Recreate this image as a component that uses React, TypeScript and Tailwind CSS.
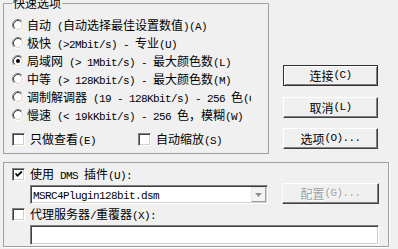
import React from 'react';

const CJK_RUN = /([\u2e80-\u9fff\u3000-\u303f\uff00-\uffef]+)/;
const CJK_TEST = /[\u2e80-\u9fff\u3000-\u303f\uff00-\uffef]/;

// SimSun-like mix: CJK at 12px, half-width Latin at 6px advance
const T = ({ s }: { s: string }) => (
  <>
    {s.split(CJK_RUN).map((p, i) =>
      p === '' ? null : CJK_TEST.test(p) ? (
        <span key={i} className="font-['Noto_Sans_CJK_SC',sans-serif] text-[12px]">
          {p}
        </span>
      ) : (
        <span key={i} className="font-['Liberation_Mono',monospace] text-[11px] tracking-[-0.6px]">
          {p}
        </span>
      )
    )}
  </>
);

const Radio = ({ on }: { on?: boolean }) => (
  <svg width="12" height="12" viewBox="0 0 12 12" className="shrink-0">
    <circle cx="6" cy="6" r="5" fill="#fff" />
    <path d="M2.11 9.89 A5.5 5.5 0 0 1 9.89 2.11" fill="none" stroke="#808080" />
    <path d="M9.89 2.11 A5.5 5.5 0 0 1 2.11 9.89" fill="none" stroke="#fff" />
    <path d="M2.82 9.18 A4.5 4.5 0 0 1 9.18 2.82" fill="none" stroke="#404040" />
    <path d="M9.18 2.82 A4.5 4.5 0 0 1 2.82 9.18" fill="none" stroke="#d4d0c8" />
    {on && <circle cx="6" cy="6" r="2" fill="#000" />}
  </svg>
);

const Check = ({ on }: { on?: boolean }) => (
  <div className="w-[13px] h-[13px] shrink-0 bg-white border border-t-[#808080] border-l-[#808080] border-r-white border-b-white shadow-[inset_1px_1px_0_#404040,inset_-1px_-1px_0_#d4d0c8] flex items-center justify-center">
    {on && (
      <svg width="9" height="9" viewBox="0 0 9 9">
        <path d="M1.5 3.5 L3.5 5.8 L7.8 1.5" fill="none" stroke="#000" strokeWidth="1.8" />
      </svg>
    )}
  </div>
);

const Button = ({ label, primary, disabled, w = 'w-[95px]' }: { label: string; primary?: boolean; disabled?: boolean; w?: string }) => (
  <div
    className={
      'h-[21px] flex items-center justify-center bg-[#f0f0f0] whitespace-pre ' +
      w +
      (primary
        ? ' border border-[#303030] shadow-[inset_1px_1px_0_#fff,inset_-1px_-1px_0_#808080]'
        : ' border border-t-white border-l-white border-r-[#404040] border-b-[#404040] shadow-[inset_-1px_-1px_0_#808080]') +
      (disabled ? ' text-[#a0a0a0] [text-shadow:1px_1px_0_#fff]' : ' text-black')
    }
  >
    <T s={label} />
  </div>
);

const speeds = [
  { label: '自动 (自动选择最佳设置数值)(A)' },
  { label: '极快 (>2Mbit/s) - 专业(U)' },
  { label: '局域网 (> 1Mbit/s) - 最大颜色数(L)', on: true },
  { label: '中等 (> 128Kbit/s) - 最大颜色数(M)' },
  { label: '调制解调器 (19 - 128Kbit/s) - 256 色(O)' },
  { label: '慢速 (< 19kKbit/s) - 256 色，模糊(W)' },
];

export default function App() {
  return (
    <div className="w-[398px] h-[249px] overflow-hidden bg-[#f0f0f0] text-black flex flex-col">
      <div className="flex items-start">
        <fieldset className="ml-[3px] mt-[-3px] w-[266px] border border-[#a0a0a0] pl-[8px] pt-[6px] pb-[5px]">
          <legend className="px-[1px] text-[12px] leading-[12px]">
            <T s="快速选项" />
          </legend>
          {speeds.map((r) => (
            <div key={r.label} className="flex items-center h-[18px] w-[239px] overflow-hidden whitespace-pre leading-[18px]">
              <Radio on={r.on} />
              <div className="ml-[3px]">
                <T s={r.label} />
              </div>
            </div>
          ))}
          <div className="flex items-center h-[18px] mt-[6px] whitespace-pre leading-[18px]">
            <div className="flex items-center w-[126px]">
              <Check />
              <div className="ml-[5px]">
                <T s="只做查看(E)" />
              </div>
            </div>
            <div className="flex items-center">
              <Check />
              <div className="ml-[5px]">
                <T s="自动缩放(S)" />
              </div>
            </div>
          </div>
        </fieldset>
        <div className="ml-[14px] pt-[65px] flex flex-col">
          <Button label="连接(C)" primary />
          <div className="mt-[11px]">
            <Button label="取消(L)" />
          </div>
          <div className="mt-[10px]">
            <Button label="选项(O)..." />
          </div>
        </div>
      </div>

      <div className="ml-[3px] mt-[8px] w-[386px] h-[85px] border border-[#a0a0a0] shadow-[1px_1px_0_#fff] pl-[8px] pt-[2px]">
        <div className="flex items-center h-[18px] whitespace-pre leading-[18px]">
          <Check on />
          <div className="ml-[5px]">
            <T s="使用 DMS 插件(U):" />
          </div>
        </div>
        <div className="flex items-end h-[21px] pl-[18px]">
          <div className="w-[238px] h-[19px] bg-white border border-t-[#808080] border-l-[#808080] border-r-white border-b-white shadow-[inset_1px_1px_0_#404040,inset_-1px_-1px_0_#d4d0c8] flex items-center pl-[2px] pr-[1px] whitespace-pre">
            <div className="flex-1 leading-[15px]">
              <T s="MSRC4Plugin128bit.dsm" />
            </div>
            <div className="w-[15px] h-[15px] bg-[#f4f4f4] border border-t-[#e8e8e8] border-l-[#e8e8e8] border-r-[#a0a0a0] border-b-[#a0a0a0] flex items-center justify-center">
              <svg width="7" height="4" viewBox="0 0 7 4">
                <path d="M0 0 H7 L3.5 4 Z" fill="#909090" />
              </svg>
            </div>
          </div>
          <div className="ml-[14px]">
            <Button label="配置(G)..." disabled w="w-[97px]" />
          </div>
        </div>
        <div className="flex items-center h-[18px] mt-[1px] whitespace-pre leading-[18px]">
          <Check />
          <div className="ml-[5px]">
            <T s="代理服务器/重覆器(X):" />
          </div>
        </div>
        <div className="ml-[18px] mt-[2px] w-[349px] h-[20px] bg-white border border-t-[#808080] border-l-[#808080] border-r-white border-b-white shadow-[inset_1px_1px_0_#404040,inset_-1px_-1px_0_#d4d0c8]" />
      </div>
    </div>
  );
}
